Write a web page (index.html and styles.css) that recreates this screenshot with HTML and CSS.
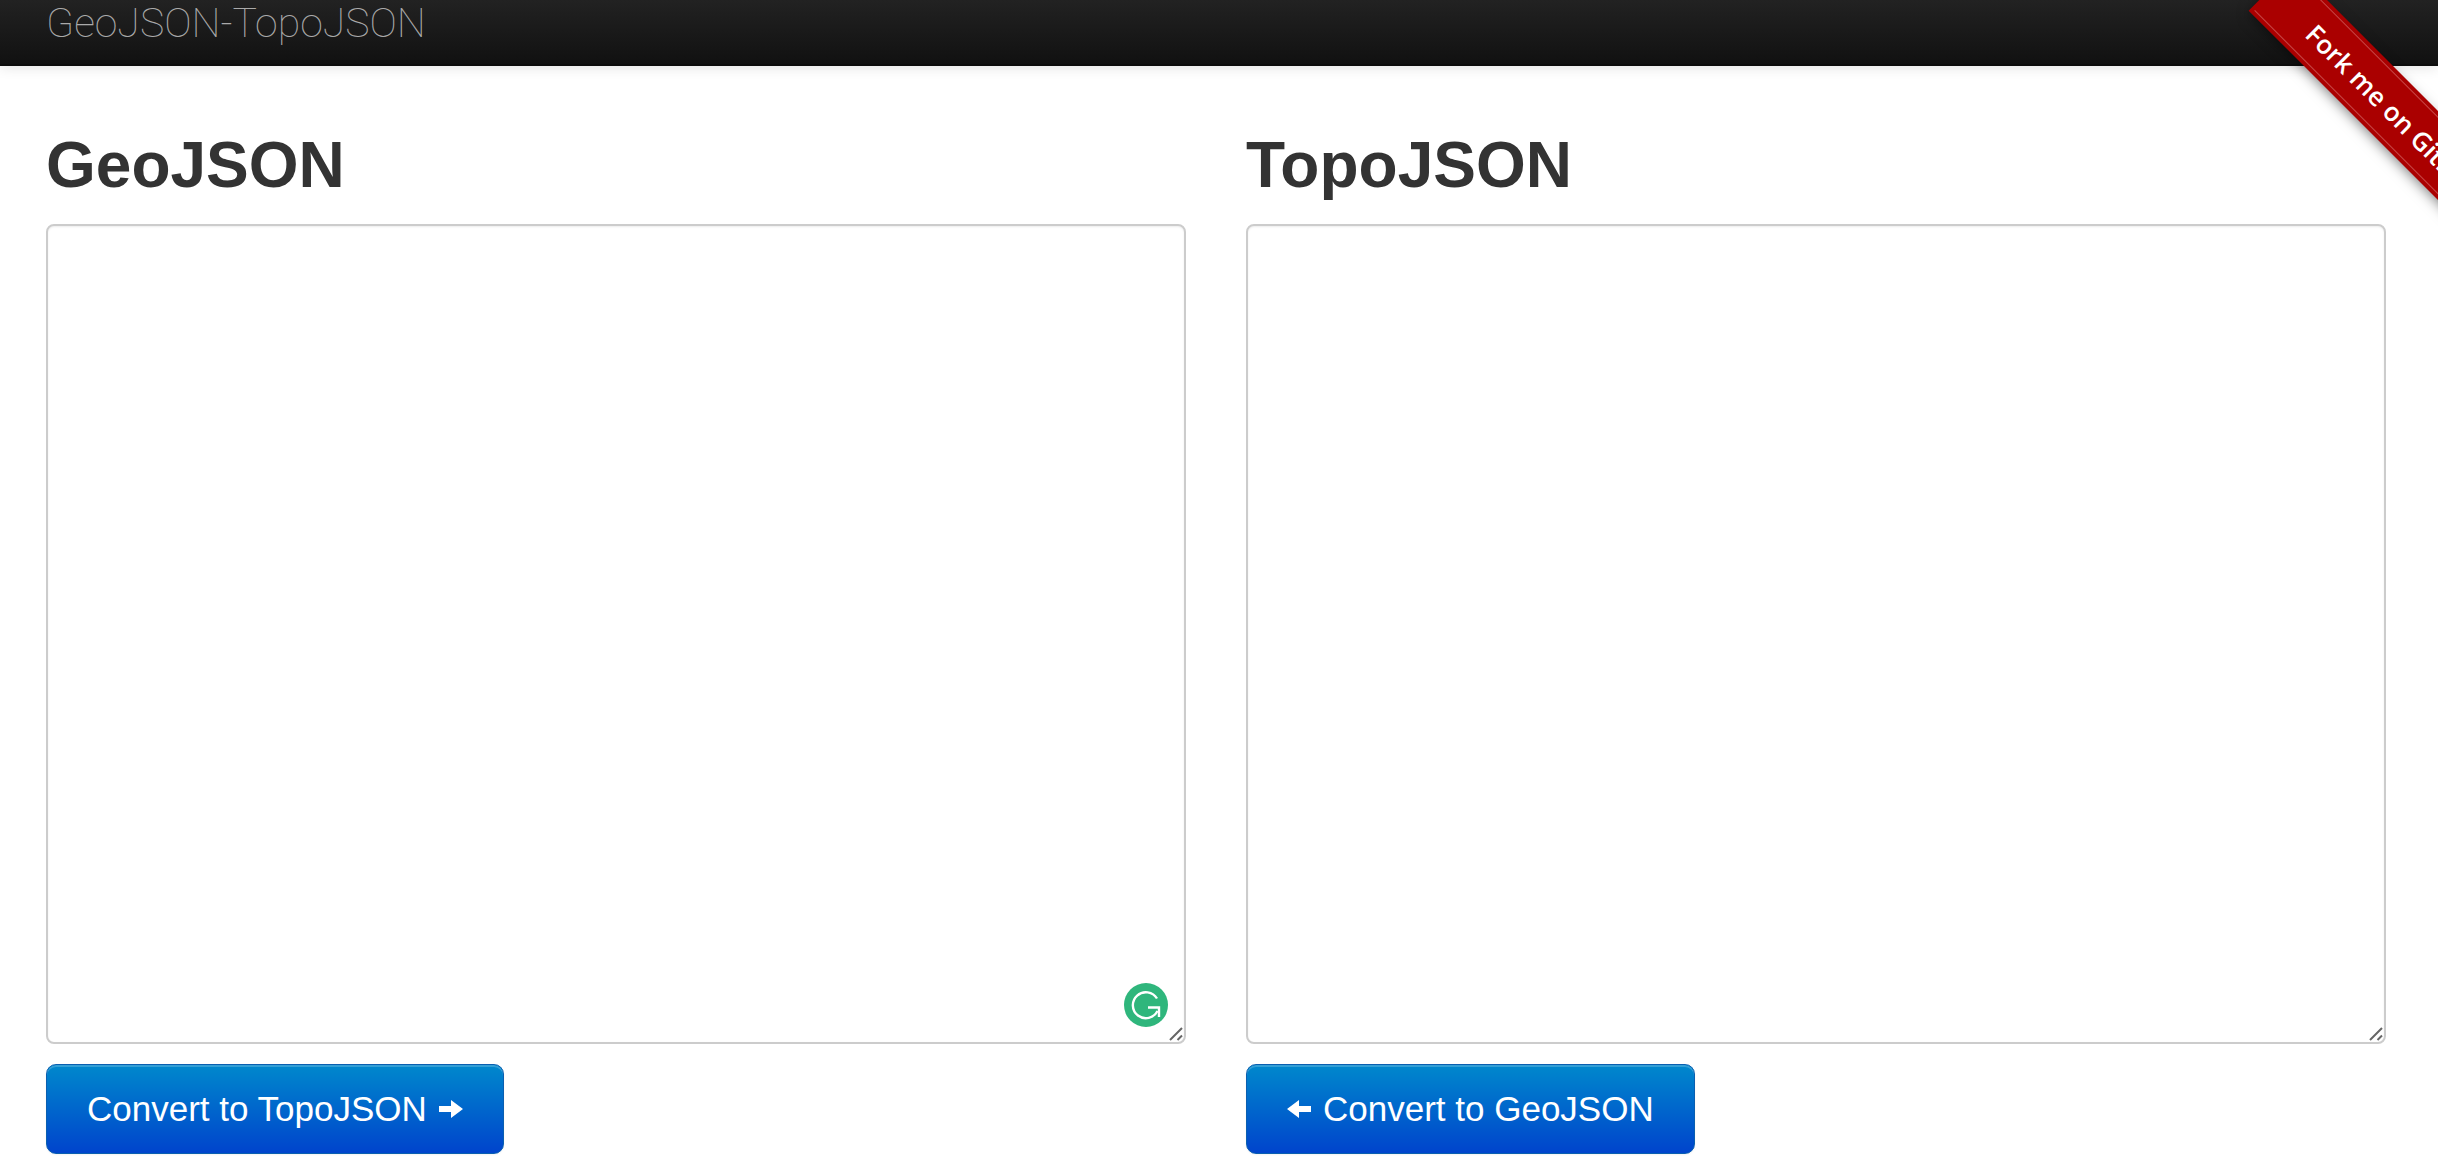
FILE: index.html
```html
<!DOCTYPE html>
<html lang="en">
<head>
  <meta charset="UTF-8">
  <meta name="viewport" content="width=device-width, initial-scale=1.0">
  <title>GeoJSON-TopoJSON</title>
  <link rel="stylesheet" href="styles.css">
</head>
<body>
  <header class="navbar">
    <a class="brand" href="#">GeoJSON-TopoJSON</a>
  </header>

  <!-- Ribbon in the corner -->
  <div class="ribbon-clip">
    <a class="ribbon" href="#">Fork me on GitHub</a>
  </div>

  <main class="panels">
    <section class="panel">
      <h2 class="panel-title">GeoJSON</h2>
      <div class="editor">
        <textarea class="editor-input" aria-label="GeoJSON"></textarea>
        <svg class="grammarly" viewBox="0 0 44 44" aria-hidden="true">
          <circle cx="22" cy="22" r="22" fill="#2fb67c"/>
          <path d="M33 15.5A13 13 0 1 0 33.5 28" fill="none" stroke="#fff" stroke-width="2.4"/>
          <path d="M24 24.5H35V34" fill="none" stroke="#fff" stroke-width="2.4"/>
          <path d="M25 33.500L35 24.500" fill="none" stroke="#fff" stroke-width="0"/>
        </svg>
        <svg class="resizer" viewBox="0 0 14 14" aria-hidden="true">
          <path d="M1 13L13 1M8.500 13L13 8.500" fill="none" stroke="#666" stroke-width="2"/>
        </svg>
      </div>
      <button class="btn" type="button">
        Convert to TopoJSON
        <svg class="arrow" viewBox="0 0 24 18" aria-hidden="true">
          <path d="M0 6H12V0L24 9L12 18V12H0Z" fill="#fff"/>
        </svg>
      </button>
    </section>

    <section class="panel">
      <h2 class="panel-title">TopoJSON</h2>
      <div class="editor">
        <textarea class="editor-input" aria-label="TopoJSON"></textarea>
        <svg class="resizer" viewBox="0 0 14 14" aria-hidden="true">
          <path d="M1 13L13 1M8.500 13L13 8.500" fill="none" stroke="#666" stroke-width="2"/>
        </svg>
      </div>
      <button class="btn" type="button">
        <svg class="arrow" viewBox="0 0 24 18" aria-hidden="true">
          <path d="M24 6H12V0L0 9L12 18V12H24Z" fill="#fff"/>
        </svg>
        Convert to GeoJSON
      </button>
    </section>
  </main>
</body>
</html>
```

FILE: styles.css
```css
* {
  margin: 0;
  padding: 0;
  box-sizing: border-box;
}

html,
body {
  height: 100%;
  overflow: hidden;
}

body {
  background-color: white;
  color: #333;
  font-family: "Liberation Sans", Arial, sans-serif;
}

.navbar {
  height: 66px;
  padding-left: 46px;
  background: linear-gradient(#222, #111);
  border-bottom: 2px solid #0d0d0d;
  box-shadow: 0 2px 12px rgba(0, 0, 0, 0.1);
}

.brand {
  display: block;
  font-family: Roboto, "Liberation Sans", sans-serif;
  font-weight: 100;
  font-size: 41px;
  line-height: 46px;
  color: #aaa;
  text-decoration: none;
}

/* Ribbon */
.ribbon-clip {
  position: absolute;
  top: 0;
  right: 0;
  width: 300px;
  height: 300px;
  overflow: hidden;
}

.ribbon {
  position: absolute;
  top: -38px;
  left: 135px;
  display: flex;
  align-items: center;
  width: 420px;
  height: 57px;
  padding-left: 54px;
  background-color: #a00;
  border-top: 2px solid #c64444;
  border-bottom: 2px solid #c64444;
  outline: 4px solid #a00;
  outline-offset: -1px;
  box-shadow: 0 4px 14px rgba(0, 0, 0, 0.55);
  transform: rotate(45deg);
  transform-origin: 0 50%;
  font-family: "Open Sans", "Liberation Sans", sans-serif;
  font-weight: 600;
  font-size: 26px;
  color: white;
  text-decoration: none;
  white-space: nowrap;
}

/* Two columns */
.panels {
  display: grid;
  grid-template-columns: 1140px 1140px;
  column-gap: 60px;
  padding-left: 46px;
}

.panel-title {
  margin-top: 63px;
  margin-bottom: 22px;
  font-size: 64px;
  line-height: 73px;
  font-weight: bold;
  color: #333;
}

.editor {
  position: relative;
  height: 820px;
}

.editor-input {
  display: block;
  width: 100%;
  height: 100%;
  background-color: white;
  border: 2px solid #ccc;
  border-radius: 8px;
  box-shadow: inset 0 1px 2px rgba(0, 0, 0, 0.075);
  resize: none;
  outline: none;
}

.grammarly {
  position: absolute;
  right: 18px;
  bottom: 17px;
  width: 44px;
  height: 44px;
}

.resizer {
  position: absolute;
  right: 3px;
  bottom: 3px;
  width: 14px;
  height: 14px;
}

.btn {
  display: inline-flex;
  align-items: center;
  gap: 12px;
  height: 90px;
  margin-top: 20px;
  padding: 0 40px;
  background: linear-gradient(#08c, #04c);
  border: 1px solid #0a5fb0;
  border-radius: 10px;
  box-shadow: inset 0 2px 0 rgba(255, 255, 255, 0.2), 0 1px 2px rgba(0, 0, 0, 0.05);
  font-family: "Liberation Sans", Arial, sans-serif;
  font-size: 35px;
  color: white;
  cursor: pointer;
}

.arrow {
  width: 24px;
  height: 18px;
}
```
